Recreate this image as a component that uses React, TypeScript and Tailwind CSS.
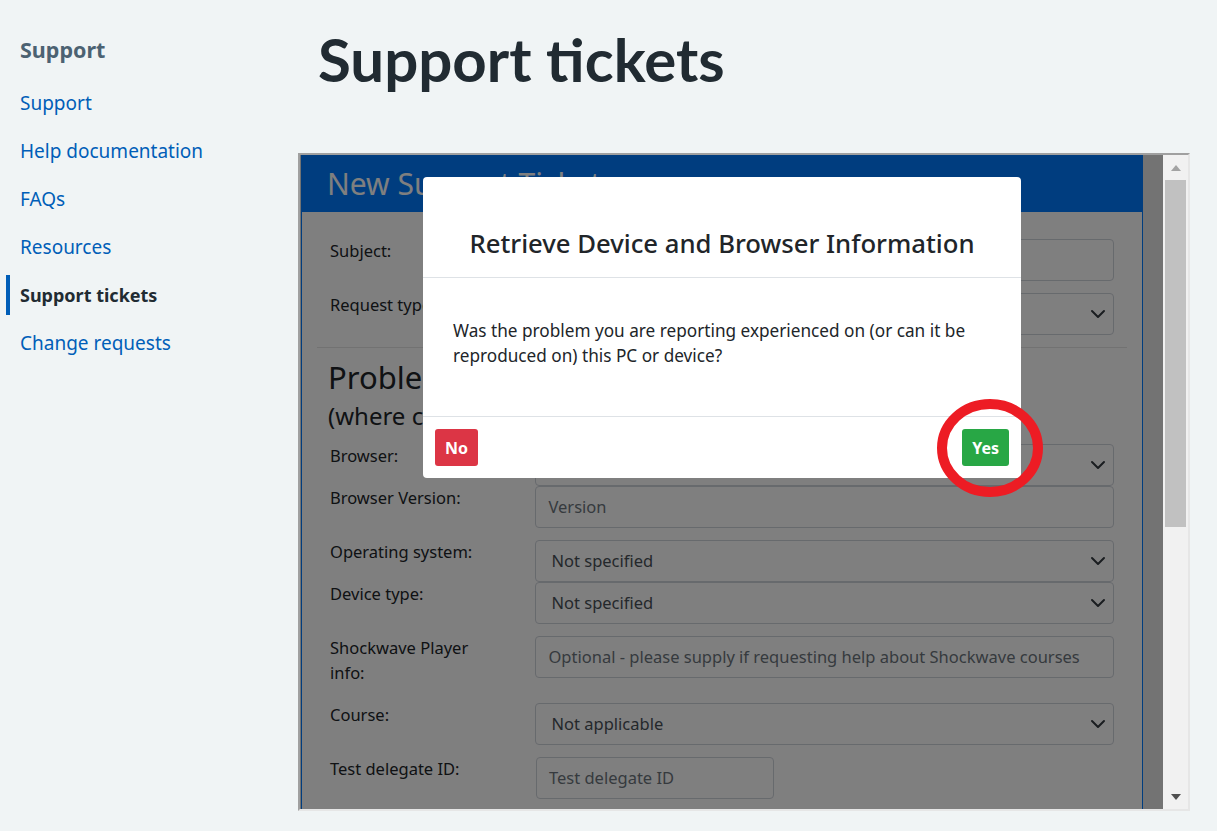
import type { ReactNode } from "react";

const NAV = [
  { label: "Support", active: false },
  { label: "Help documentation", active: false },
  { label: "FAQs", active: false },
  { label: "Resources", active: false },
  { label: "Support tickets", active: true },
  { label: "Change requests", active: false },
];

function Chevron() {
  return (
    <svg width="16" height="16" viewBox="0 0 16 16" className="absolute right-[7px] top-1/2 -translate-y-1/2">
      <path d="M2 5l6 6 6-6" fill="none" stroke="#343a40" strokeWidth="2" strokeLinecap="round" strokeLinejoin="round" />
    </svg>
  );
}

function Row({ label, className, children }: { label: ReactNode; className: string; children: ReactNode }) {
  return (
    <div className={`flex items-start px-[13px] ${className}`}>
      <div className="-mt-[1px] w-[206px] text-[16.5px] leading-[25px] text-[#212529]">{label}</div>
      {children}
    </div>
  );
}

function TextBox({ placeholder, wide = true }: { placeholder: string; wide?: boolean }) {
  return (
    <div
      className={`flex h-[42px] items-center rounded-[4px] border border-[#ced4da] bg-white px-[12px] text-[16.5px] text-[#6c757d] ${
        wide ? "w-[580px]" : "w-[238px]"
      }`}
    >
      {placeholder}
    </div>
  );
}

function SelectBox({ value }: { value: string }) {
  return (
    <div className="relative flex h-[42px] w-[580px] items-center rounded-[4px] border border-[#ced4da] bg-white pl-[15px] text-[16.5px] text-[#495057]">
      {value}
      <Chevron />
    </div>
  );
}

export default function App() {
  return (
    <div
      className="relative flex min-h-[831px] w-full bg-[#f0f4f5]"
      style={{ fontFamily: '"Noto Sans", "Open Sans", sans-serif' }}
    >
      {/* sidebar */}
      <aside className="w-[298px] shrink-0 pt-[35px]">
        <h2 className="pl-[20px] text-[21.5px] font-bold leading-[30px] text-[#4c6272]">Support</h2>
        <nav className="mt-[18px] flex flex-col gap-2 pl-[6px]">
          {NAV.map((item) => (
            <a
              key={item.label}
              className={`flex h-10 items-center border-l-4 pl-[10px] ${
                item.active
                  ? "border-[#005eb8] text-[18px] font-bold text-[#212b32]"
                  : "border-transparent text-[19px] text-[#005eb8]"
              }`}
            >
              {item.label}
            </a>
          ))}
        </nav>
      </aside>

      {/* main */}
      <main className="pt-[23px]">
        <h1
          className="ml-[20px] text-[60px] font-bold leading-[72px] text-[#212b32]"
          style={{ fontFamily: 'Lato, "Noto Sans", sans-serif' }}
        >
          Support tickets
        </h1>

        <div className="mt-[58px] flex h-[658px] w-[892px] border-2 border-b-[#e6e6e6] border-l-[#a0a0a0] border-r-[#e6e6e6] border-t-[#a0a0a0]">
          {/* iframe document */}
          <div className="relative flex-1 overflow-hidden bg-[#e6e6e6]">
            <div className="ml-[1px] w-[842px] border border-t-0 border-[#007bff] bg-white">
              <div className="flex h-[57px] items-center bg-[#007bff] pl-[25px] text-[30px] text-white">
                New Support Ticket
              </div>
              <div className="px-[15px] pb-[20px] pt-[27px]">
                <Row label="Subject:" className="">
                  <TextBox placeholder="" />
                </Row>
                <Row label="Request type:" className="mt-[12px]">
                  <SelectBox value="Problem" />
                </Row>
                <div className="mt-[12px] h-px bg-black/10" />
                <div className="mt-[11px] px-[11px] text-[31px] leading-[36px] text-[#212529]">Problem Environment</div>
                <div className="mt-[6px] px-[11px] text-[24px] leading-[29px] text-[#212529]">
                  (where can the problem be seen)
                </div>
                <Row label="Browser:" className="mt-[14px]">
                  <SelectBox value="Not specified" />
                </Row>
                <Row label="Browser Version:" className="">
                  <TextBox placeholder="Version" />
                </Row>
                <Row label="Operating system:" className="mt-[12px]">
                  <SelectBox value="Not specified" />
                </Row>
                <Row label="Device type:" className="">
                  <SelectBox value="Not specified" />
                </Row>
                <Row
                  label={
                    <>
                      Shockwave Player
                      <br />
                      info:
                    </>
                  }
                  className="mt-[12px]"
                >
                  <TextBox placeholder="Optional - please supply if requesting help about Shockwave courses" />
                </Row>
                <Row label="Course:" className="mt-[18px]">
                  <SelectBox value="Not applicable" />
                </Row>
                <Row label="Test delegate ID:" className="mt-[12px]">
                  <TextBox placeholder="Test delegate ID" wide={false} />
                </Row>
              </div>
            </div>

            {/* backdrop */}
            <div className="absolute inset-0 bg-black/50" />

            {/* modal */}
            <div className="absolute left-[123px] top-[22px] flex h-[301px] w-[598px] flex-col rounded-[4px] bg-white">
              <div className="border-b border-[#dee2e6] pb-[16px] pt-[50px] text-center text-[25.7px] font-medium leading-[34px] text-[#212529]">
                Retrieve Device and Browser Information
              </div>
              <div className="flex-1 px-[30px] pt-[40px] text-[17.2px] leading-[25px] text-[#212529]">
                Was the problem you are reporting experienced on (or can it be reproduced on) this PC or device?
              </div>
              <div className="flex h-[62px] items-center justify-between border-t border-[#dee2e6] px-[12px]">
                <button className="h-[37px] rounded-[3px] bg-[#dc3545] px-[10px] text-[16px] font-bold text-white">No</button>
                <button className="h-[37px] rounded-[3px] bg-[#28a745] px-[10px] text-[16px] font-bold text-white">Yes</button>
              </div>
            </div>
          </div>

          {/* scrollbar */}
          <div className="flex w-[25px] flex-col bg-[#f1f1f1]">
            <div className="flex h-[25px] items-center justify-center">
              <svg width="12" height="8" viewBox="0 0 12 8">
                <path d="M1 7L6 1l5 6z" fill="#a3a3a3" />
              </svg>
            </div>
            <div className="mx-[2px] h-[347px] bg-[#c1c1c1]" />
            <div className="flex-1" />
            <div className="flex h-[25px] items-center justify-center">
              <svg width="12" height="8" viewBox="0 0 12 8">
                <path d="M1 1h10L6 7z" fill="#505050" />
              </svg>
            </div>
          </div>
        </div>
      </main>

      {/* highlight around Yes */}
      <svg className="absolute left-[937px] top-[399px]" width="106" height="98" viewBox="0 0 106 98">
        <ellipse cx="53" cy="49" rx="48" ry="44" fill="none" stroke="#ed1c24" strokeWidth="10" />
      </svg>
    </div>
  );
}
